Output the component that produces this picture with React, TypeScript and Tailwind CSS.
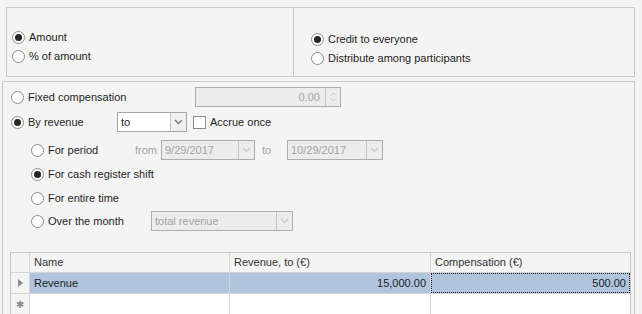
import type { ReactNode } from 'react';

const font = { fontFamily: '"Liberation Sans", Arial, sans-serif' };

function Radio({ checked }: { checked?: boolean }) {
  return (
    <span className="w-[13px] h-[13px] rounded-full border border-[#8c8c8c] bg-white flex items-center justify-center shrink-0">
      {checked && <span className="w-[7px] h-[7px] rounded-full bg-[#262626]" />}
    </span>
  );
}

function Opt({ checked, label }: { checked?: boolean; label: string }) {
  return (
    <div className="flex items-center gap-[4px]">
      <Radio checked={checked} />
      <span>{label}</span>
    </div>
  );
}

function Chevron({ color }: { color: string }) {
  return (
    <svg width="9" height="6" viewBox="0 0 9 6">
      <path d="M1 1 L4.5 4.5 L8 1" fill="none" stroke={color} strokeWidth="1.4" />
    </svg>
  );
}

function Combo({
  w,
  value,
  disabled
}: {
  w: string;
  value: string;
  disabled?: boolean;
}) {
  const box = disabled
    ? 'bg-[#ececec] border-[#adadad] text-[#a3a3a3]'
    : 'bg-white border-[#a5a5a5] text-[#1e1e1e]';
  return (
    <div className={`${w} h-[20px] border ${box} flex`}>
      <div className="flex-1 pl-[3px] flex items-center">{value}</div>
      <div className={`w-[16px] border-l ${disabled ? 'border-[#c4c4c4]' : 'border-[#c4c4c4] bg-[#f0f0f0]'} flex items-center justify-center`}>
        <Chevron color={disabled ? '#c8c8c8' : '#7a7a7a'} />
      </div>
    </div>
  );
}

function Cell({ children, className = '' }: { children?: ReactNode; className?: string }) {
  return <div className={`border-r border-[#d4d4d4] px-[4px] flex items-center ${className}`}>{children}</div>;
}

export default function App() {
  return (
    <div className="w-[642px] h-[314px] bg-[#f4f4f4] overflow-hidden text-[11px] text-[#1e1e1e]" style={font}>
      {/* top options */}
      <div className="mt-[7px] ml-[6px] w-[629px] h-[70px] border border-[#c8c8c8] flex">
        <div className="w-[287px] border-r border-[#c8c8c8] pl-[5px] pt-[20px]">
          <div className="h-[19px] flex items-center"><Opt checked label="Amount" /></div>
          <div className="h-[19px] flex items-center"><Opt label="% of amount" /></div>
        </div>
        <div className="flex-1 pl-[17px] pt-[22px]">
          <div className="h-[19px] flex items-center"><Opt checked label="Credit to everyone" /></div>
          <div className="h-[19px] flex items-center"><Opt label="Distribute among participants" /></div>
        </div>
      </div>

      {/* second panel */}
      <div className="mt-[4px] ml-[2px] w-[633px] h-[240px] border border-[#c8c8c8]">
        <div className="pl-[8px] pt-[5px]">
          <div className="h-[20px] flex items-center">
            <div className="w-[184px]"><Opt label="Fixed compensation" /></div>
            <div className="w-[146px] h-[20px] border border-[#adadad] bg-[#ececec] flex text-[#a3a3a3]">
              <div className="flex-1 flex items-center justify-end pr-[5px]">0.00</div>
              <div className="w-[15px] border-l border-[#c4c4c4] flex flex-col items-center justify-center gap-[2px]">
                <svg width="7" height="4" viewBox="0 0 7 4"><path d="M1 3.5 L3.5 1 L6 3.5" fill="none" stroke="#c4c4c4" strokeWidth="1" /></svg>
                <svg width="7" height="4" viewBox="0 0 7 4"><path d="M1 0.5 L3.5 3 L6 0.5" fill="none" stroke="#c4c4c4" strokeWidth="1" /></svg>
              </div>
            </div>
          </div>

          <div className="h-[20px] mt-[5px] flex items-center">
            <div className="w-[106px]"><Opt checked label="By revenue" /></div>
            <Combo w="w-[70px]" value="to" />
            <div className="flex items-center gap-[4px] ml-[6px]">
              <span className="w-[13px] h-[13px] border border-[#8c8c8c] bg-white" />
              <span>Accrue once</span>
            </div>
          </div>

          <div className="pl-[20px]">
            <div className="h-[20px] mt-[8px] flex items-center">
              <div className="w-[104px]"><Opt label="For period" /></div>
              <span className="w-[26px] text-[#a3a3a3]">from</span>
              <Combo w="w-[94px]" value="9/29/2017" disabled />
              <span className="w-[32px] pl-[7px] text-[#a3a3a3]">to</span>
              <Combo w="w-[96px]" value="10/29/2017" disabled />
            </div>
            <div className="h-[20px] mt-[4px] flex items-center"><Opt checked label="For cash register shift" /></div>
            <div className="h-[20px] mt-[4px] flex items-center"><Opt label="For entire time" /></div>
            <div className="h-[20px] mt-[3px] flex items-center">
              <div className="w-[120px]"><Opt label="Over the month" /></div>
              <Combo w="w-[142px]" value="total revenue" disabled />
            </div>
          </div>
        </div>

        {/* grid */}
        <div className="mt-[21px] ml-[7px] w-[621px] border border-[#c8c8c8] bg-white">
          <div className="h-[20px] flex border-b border-[#d4d4d4] bg-[#f4f4f4] text-[#333]">
            <div className="w-[19px] border-r border-[#d4d4d4]" />
            <Cell className="w-[200px]">Name</Cell>
            <Cell className="w-[201px]">Revenue, to (€)</Cell>
            <div className="flex-1 px-[4px] flex items-center">Compensation (€)</div>
          </div>
          <div className="h-[21px] flex border-b border-[#d4d4d4]">
            <div className="w-[19px] border-r border-[#d4d4d4] bg-[#f4f4f4] flex items-center justify-center">
              <svg width="5" height="8" viewBox="0 0 5 8"><path d="M0 0 L5 4 L0 8 Z" fill="#8a8a8a" /></svg>
            </div>
            <Cell className="w-[200px] bg-[#b0c4de]">Revenue</Cell>
            <Cell className="w-[201px] bg-[#b0c4de] justify-end">15,000.00</Cell>
            <div className="flex-1 bg-[#b0c4de] border border-dotted border-[#1e1e1e] px-[3px] flex items-center justify-end">500.00</div>
          </div>
          <div className="h-[20px] flex">
            <div className="w-[19px] border-r border-[#d4d4d4] bg-[#f4f4f4] flex items-center justify-center text-[#8a8a8a] text-[10px]">
              ✱
            </div>
            <Cell className="w-[200px]" />
            <Cell className="w-[201px]" />
            <div className="flex-1" />
          </div>
        </div>
      </div>
    </div>
  );
}
